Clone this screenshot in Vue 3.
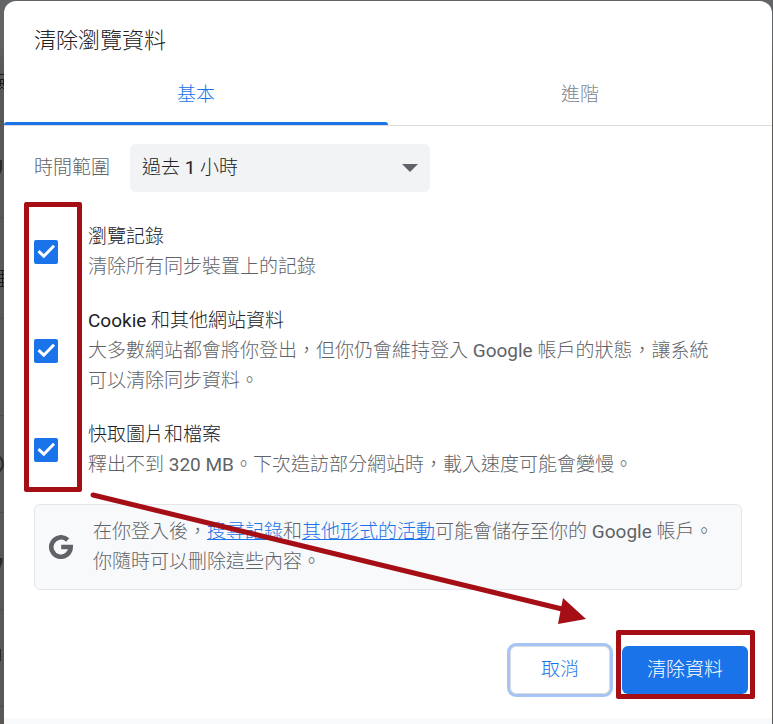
<script setup>
import { ref } from 'vue'

const tabs = ['基本', '進階']
const active = ref(0)
const range = ref('過去 1 小時')
const ranges = ['過去 1 小時', '過去 24 小時', '過去 7 天', '不限時間']
const items = ref([
  { id: 'history', title: '瀏覽記錄', text: '清除所有同步裝置上的記錄', on: true },
  {
    id: 'cookies',
    title: 'Cookie 和其他網站資料',
    text: '大多數網站都會將你登出，但你仍會維持登入 Google 帳戶的狀態，讓系統可以清除同步資料。',
    on: true,
  },
  { id: 'cache', title: '快取圖片和檔案', text: '釋出不到 320 MB。下次造訪部分網站時，載入速度可能會變慢。', on: true },
])
</script>

<template>
  <div class="backdrop">
    <svg class="behind" viewBox="0 0 4 724" aria-hidden="true">
      <path class="rule" d="M0 121.500h4M0 217.500h4M0 318.500h4M0 415.500h4M0 512.500h4M0 609.500h4M0 706.500h4" />
      <path class="glyph" d="M0 74.500h4M0 79.500h4M.5 79v7M3.500 79v7M0 83.500h4M0 89l2-2M2 87l2 2M0 270.500h4M0 274.500h4M0 278.500h4M0 282.500h4M0 286.500h4M2.500 270v17" />
      <path class="blob" d="M0 160h2v10l-2 4zM0 558h2.500v4l-2.500 6zM0 649h1v12H0z" />
      <circle class="ring" cx="-6" cy="464" r="9" />
    </svg>
    <main class="dialog" role="dialog" aria-labelledby="dialog-title">
      <h1 id="dialog-title" class="title">清除瀏覽資料</h1>
      <div class="tabs" role="tablist">
        <button
          v-for="(tab, i) in tabs"
          :key="tab"
          type="button"
          role="tab"
          class="tab"
          :class="{ active: active === i }"
          :aria-selected="active === i"
          @click="active = i"
        >{{ tab }}</button>
      </div>

      <div class="body">
        <div class="range">
          <label for="range">時間範圍</label>
          <div class="select-wrap">
            <select id="range" v-model="range">
              <option v-for="r in ranges" :key="r">{{ r }}</option>
            </select>
            <svg class="caret" viewBox="0 0 16 8" aria-hidden="true"><path d="M0 0h16L8 8z" /></svg>
          </div>
        </div>

        <div class="items">
          <div v-for="item in items" :key="item.id" class="item">
            <input :id="item.id" v-model="item.on" type="checkbox" class="box-input" />
            <svg class="box" viewBox="0 0 24 24" aria-hidden="true">
              <rect width="24" height="24" rx="2" :class="item.on ? 'box-on' : 'box-off'" />
              <path v-if="item.on" d="M4.500 11.200l5.300 5L20 5.700" />
            </svg>
            <label :for="item.id" class="item-text">
              <span class="item-title">{{ item.title }}</span>
              <span class="item-desc">{{ item.text }}</span>
            </label>
          </div>
          <div class="frame" aria-hidden="true"></div>
        </div>

        <div class="info">
          <svg class="g" viewBox="0 0 24 24" aria-hidden="true">
            <path d="M18.700 5A9.700 9.700 0 1 0 21.700 12H12.200" />
          </svg>
          <p>在你登入後，<a href="#search">搜尋記錄</a>和<a href="#activity">其他形式的活動</a>可能會儲存至你的 Google 帳戶。你隨時可以刪除這些內容。</p>
          <svg class="arrow" viewBox="0 0 498 136" aria-hidden="true">
            <path d="M5 5L474 119" class="shaft" />
            <path d="M475 108L498 129L470 134z" class="head" />
          </svg>
        </div>
      </div>

      <div class="actions">
        <button type="button" class="btn cancel">取消</button>
        <div class="marked">
          <button type="button" class="btn primary">清除資料</button>
        </div>
      </div>
      <div class="footer"></div>
    </main>
  </div>
</template>

<style>
body {
  margin: 0;
  background: #5a5856;
}
</style>

<style scoped>
.backdrop {
  position: relative;
  box-sizing: border-box;
  min-height: 100vh;
  padding: 1px 1px 0 4px;
  overflow: hidden;
  display: flex;
  background: linear-gradient(#636466 0, #636466 40px, #5a5856 70px);
  font-family: Roboto, "Noto Sans CJK TC Light", "Noto Sans CJK TC", sans-serif;
  font-size: 19px;
  line-height: 30px;
  font-weight: 400;
  color: #202124;
}
.behind {
  position: absolute;
  top: 0;
  left: 0;
  width: 4px;
  height: 724px;
  fill: none;
}
.rule {
  stroke: #504e4c;
}
.glyph {
  stroke: #1c1c1c;
}
.blob {
  fill: #2a2a2a;
}
.ring {
  stroke: #2a2a2a;
  stroke-width: 2;
}
.dialog {
  position: relative;
  flex: 1;
  min-width: 0;
  display: flex;
  flex-direction: column;
  background: #fff;
  border-radius: 12px 12px 0 0;
  overflow: hidden;
}
.title {
  margin: 0;
  padding: 25px 30px 7px;
  font-size: 22px;
  line-height: 30px;
  font-weight: 400;
}
.tabs {
  display: flex;
  border-bottom: 1px solid #dadce0;
}
.tab {
  position: relative;
  flex: 1;
  height: 62px;
  padding: 2px 0 0;
  border: 0;
  background: none;
  font: inherit;
  color: #80868b;
}
.tab.active {
  color: #1a73e8;
}
.tab.active::after {
  content: "";
  position: absolute;
  left: 0;
  right: 0;
  bottom: 0;
  height: 3px;
  border-radius: 3px 3px 0 0;
  background: #1a73e8;
}
.body {
  padding: 18px 30px 0;
}
.range {
  display: flex;
  align-items: center;
  gap: 20px;
  color: #5f6368;
}
.select-wrap {
  position: relative;
  width: 300px;
}
select {
  appearance: none;
  display: block;
  width: 100%;
  height: 48px;
  padding: 0 40px 0 12px;
  border: 0;
  border-radius: 6px;
  background: #f1f3f4;
  font: inherit;
  color: #202124;
}
.caret {
  position: absolute;
  right: 12px;
  top: 20px;
  width: 16px;
  height: 8px;
  fill: #5f6368;
  pointer-events: none;
}
.items {
  position: relative;
  display: flex;
  flex-direction: column;
  gap: 24px;
  padding: 30px 16px 24px 0;
}
.item {
  position: relative;
  display: flex;
  align-items: center;
  gap: 30px;
}
.box-input {
  position: absolute;
  left: 0;
  width: 24px;
  height: 24px;
  margin: 0;
  opacity: 0;
}
.box {
  flex: none;
  width: 24px;
  height: 24px;
  fill: none;
  stroke: #fff;
  stroke-width: 3;
  pointer-events: none;
}
.box-on {
  fill: #1a73e8;
  stroke: none;
}
.box-off {
  fill: #fff;
  stroke: #5f6368;
}
.item-text {
  display: flex;
  flex-direction: column;
}
.item-desc {
  color: #5f6368;
}
.frame {
  position: absolute;
  left: -10px;
  top: 10px;
  bottom: 12px;
  width: 48px;
  border: 5px solid #a50e15;
  border-radius: 2px;
  pointer-events: none;
}
.info {
  position: relative;
  display: flex;
  align-items: center;
  gap: 20px;
  padding: 12px 14px;
  border: 1px solid #e4e6e9;
  border-radius: 6px;
  background: #f8f9fb;
  color: #5f6368;
}
.info p {
  margin: 0;
}
.info a {
  color: #1a73e8;
  text-decoration: underline;
}
.g {
  flex: none;
  width: 24px;
  height: 24px;
  fill: none;
  stroke: #5f6368;
  stroke-width: 4.6;
}
.arrow {
  position: absolute;
  left: 53px;
  top: -15px;
  width: 498px;
  height: 136px;
  pointer-events: none;
}
.shaft {
  fill: none;
  stroke: #a50e15;
  stroke-width: 5;
  stroke-linecap: round;
}
.head {
  fill: #a50e15;
}
.actions {
  display: flex;
  justify-content: flex-end;
  gap: 12px;
  padding: 56px 24px 24px;
}
.btn {
  height: 48px;
  padding: 0 25px;
  border: 0;
  border-radius: 6px;
  font: inherit;
}
.cancel {
  padding: 0 30px;
  border: 1px solid #dadce0;
  background: #fff;
  color: #1a73e8;
  box-shadow: 0 0 0 3px #a6c5f4;
}
.primary {
  display: block;
  background: #1a73e8;
  color: #fff;
}
.marked {
  position: relative;
}
.marked::after {
  content: "";
  position: absolute;
  inset: -16px -7px -5px -6px;
  border: 5px solid #a50e15;
  border-radius: 2px;
  pointer-events: none;
}
.footer {
  flex: 1;
  min-height: 6px;
  background: #f8f9fa;
}
</style>
